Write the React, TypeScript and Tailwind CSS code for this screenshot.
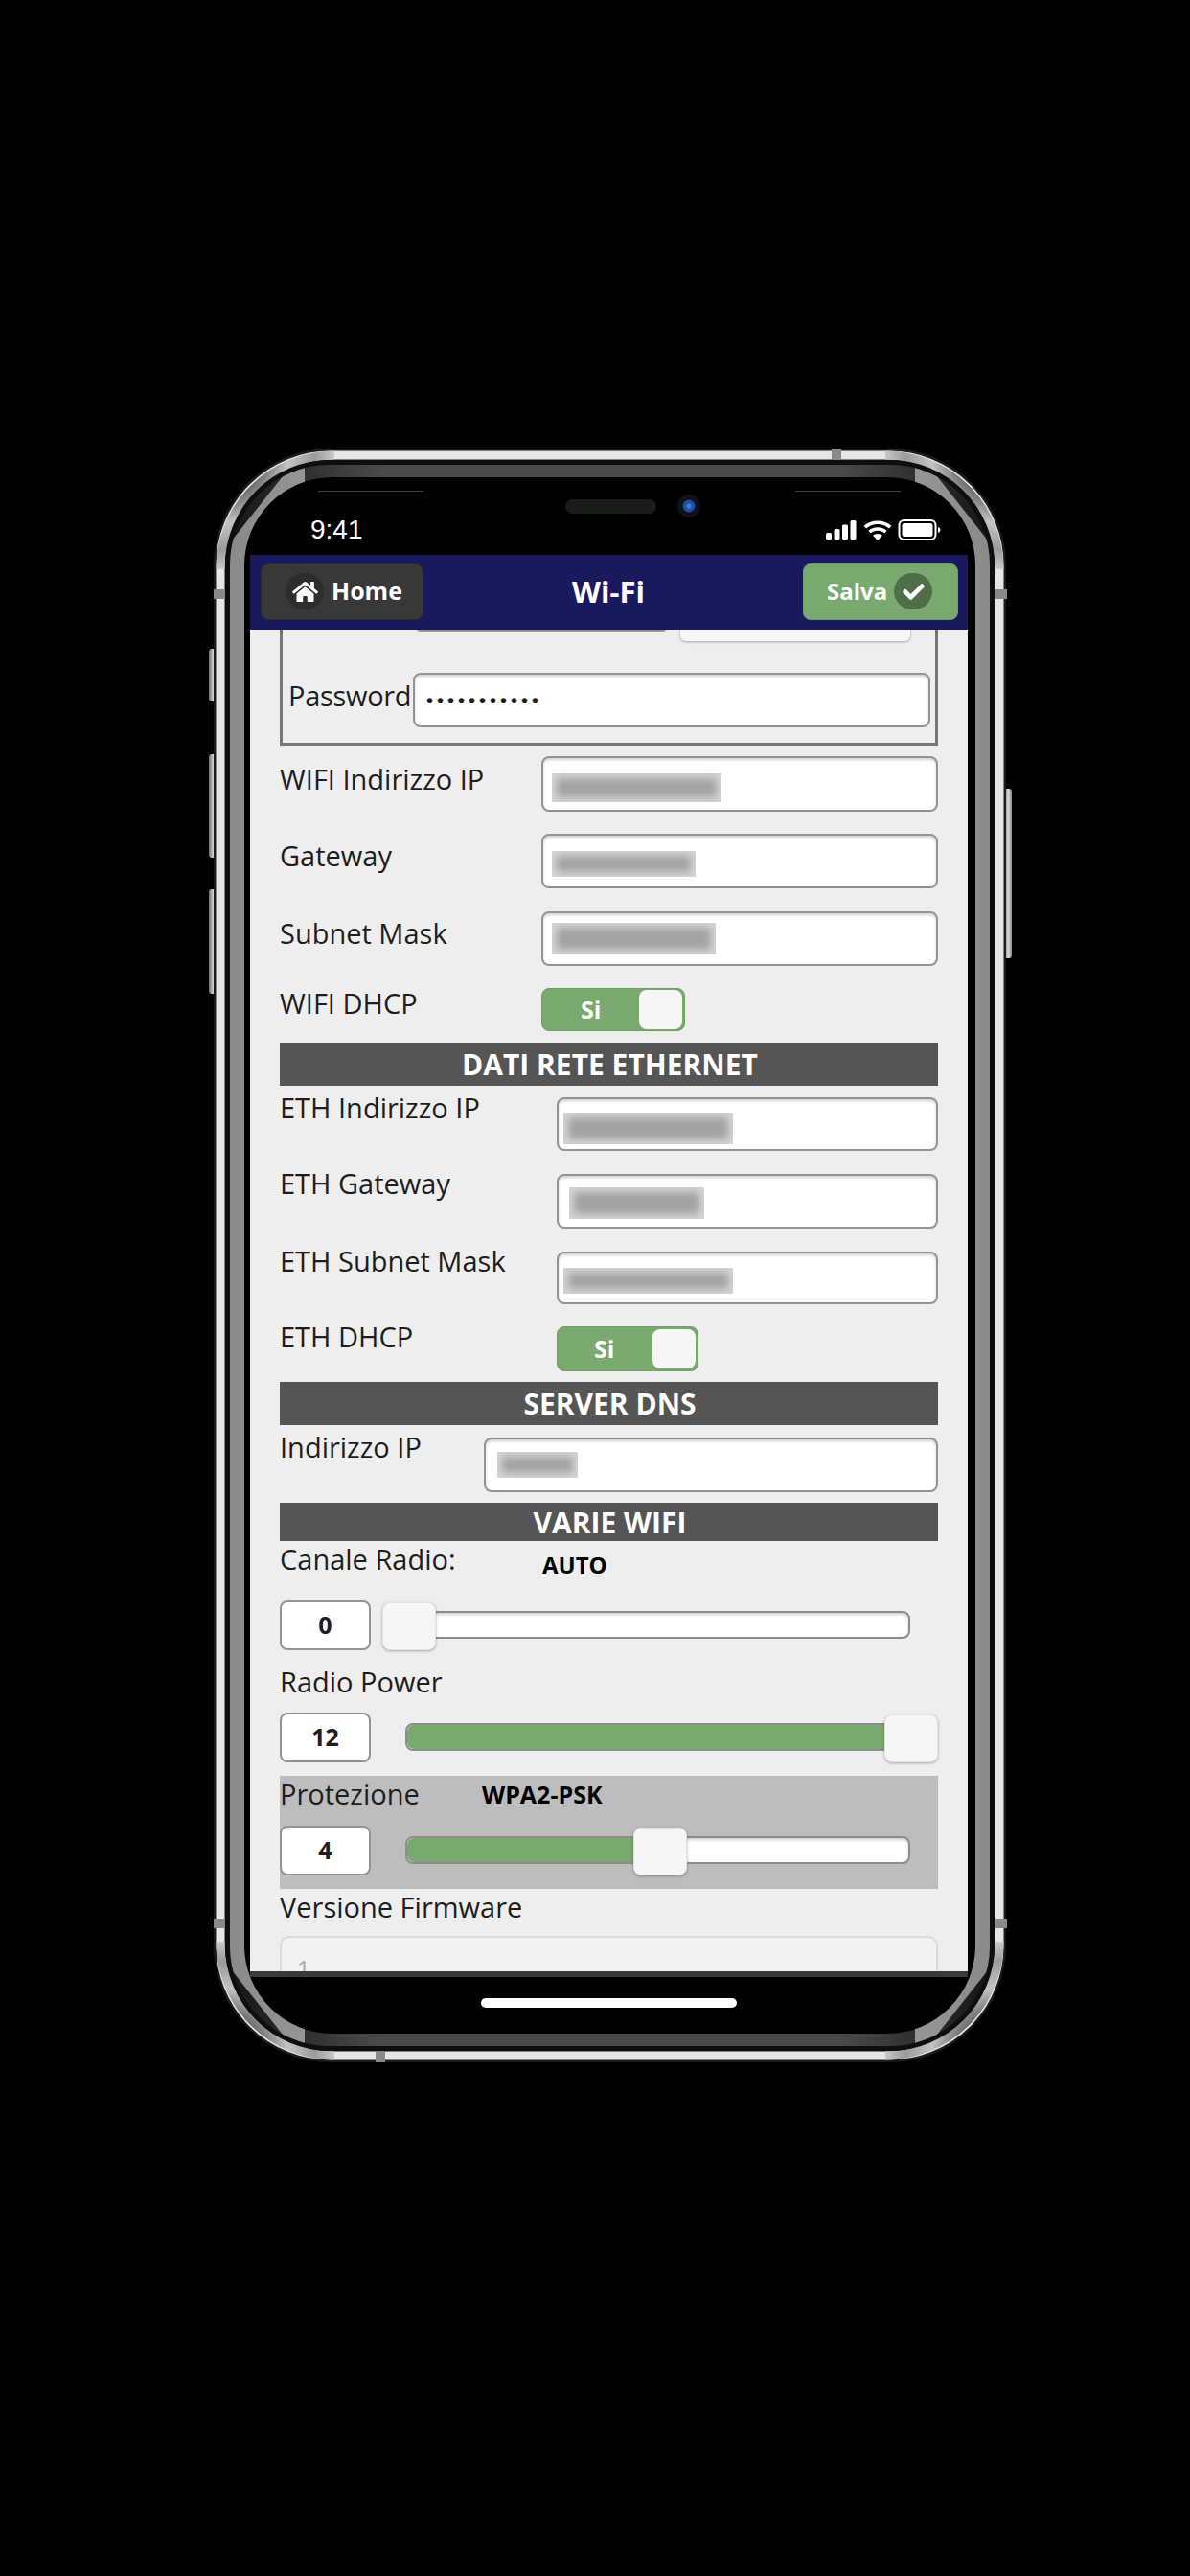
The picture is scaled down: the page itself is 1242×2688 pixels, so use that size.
import type { ReactNode } from "react"
import { FaCheck, FaHome } from "react-icons/fa"

const font = "font-['Open_Sans',sans-serif]"

function Blurred({ className }: { className: string }) {
  return (
    <div className={`overflow-hidden bg-[#d6d6d6] p-[5px] ${className}`}>
      <div className="h-full w-full bg-[#a2a2a2] blur-[4px]" />
    </div>
  )
}

function TextBox({ className, children }: { className: string; children?: ReactNode }) {
  return (
    <div className={`rounded-[8px] border-2 border-[#939393] bg-white shadow-[inset_0_2px_3px_rgba(0,0,0,0.18)] ${className}`}>
      {children}
    </div>
  )
}

function Row({ label, labelClass, className, children }: { label: string; labelClass: string; className: string; children: ReactNode }) {
  return (
    <div className={`flex ${className}`}>
      <div className={`shrink-0 text-[29px] leading-[20px] whitespace-nowrap text-[#1d1d1d] ${labelClass}`}>{label}</div>
      {children}
    </div>
  )
}

function Toggle({ className }: { className: string }) {
  return (
    <div className={`flex items-center justify-between rounded-[8px] border border-[#6f9e66] bg-[#79a96f] pr-[2px] ${className}`}>
      <span className="text-[25px] font-bold text-white">Si</span>
      <div className="h-[41px] w-[45px] rounded-[8px] bg-[#f6f6f6]" />
    </div>
  )
}

function SectionBar({ title, className }: { title: string; className: string }) {
  return (
    <div className={`flex items-center justify-center bg-[#555555] pl-[2px] text-[30px] font-bold text-white ${className}`}>{title}</div>
  )
}

function Slider({ value, max, className }: { value: number; max: number; className?: string }) {
  const left = (value / max) * 524 - 26
  return (
    <div className={`flex items-start ${className ?? ""}`}>
      <div className="flex h-[52px] w-[95px] items-center justify-center rounded-[8px] border-2 border-[#939393] bg-white text-[25px] font-bold text-[#1d1d1d]">
        {value}
      </div>
      <div className="relative ml-[36px] mt-[11px] h-[29px] w-[527px] rounded-[8px] border-2 border-[#8c8c8c] bg-white shadow-[inset_0_2px_3px_rgba(0,0,0,0.18)]">
        {value > 0 && <div className="h-full rounded-l-[7px] bg-[#79a96f]" style={{ width: left + 10 }} />}
        <div
          className="absolute top-[-11px] h-[50px] w-[56px] rounded-[8px] border border-[#e2e2e2] bg-[#f6f6f6] shadow-[0_1px_3px_rgba(0,0,0,0.3)]"
          style={{ left }}
        />
      </div>
    </div>
  )
}

function PhoneFrame() {
  const cornerArc = "M3 122 A119 119 0 0 1 122 3"
  return (
    <svg className="absolute inset-0 overflow-visible" width="827" height="1684" viewBox="0 0 827 1684" fill="none">
      <defs>
        <radialGradient id="corner" gradientUnits="userSpaceOnUse" cx="0" cy="0" r="135">
          <stop offset="0.36" stopColor="#6a6a6a" />
          <stop offset="0.55" stopColor="#c4c4c4" />
          <stop offset="0.75" stopColor="#9a9a9a" />
          <stop offset="1" stopColor="#e8e8e8" />
        </radialGradient>
        <linearGradient id="sideL" x1="0" x2="1" y1="0" y2="0">
          <stop offset="0" stopColor="#8a8a8a" />
          <stop offset="0.35" stopColor="#b4b4b4" />
          <stop offset="1" stopColor="#555555" />
        </linearGradient>
        <linearGradient id="sideR" x1="1" x2="0" y1="0" y2="0">
          <stop offset="0" stopColor="#8a8a8a" />
          <stop offset="0.35" stopColor="#b4b4b4" />
          <stop offset="1" stopColor="#555555" />
        </linearGradient>
        <linearGradient id="topBand" x1="0" x2="1" y1="0" y2="0">
          <stop offset="0" stopColor="#161616" />
          <stop offset="0.2" stopColor="#4a4a4a" />
          <stop offset="0.8" stopColor="#4a4a4a" />
          <stop offset="1" stopColor="#161616" />
        </linearGradient>
        <linearGradient id="button" x1="0" x2="1" y1="0" y2="0">
          <stop offset="0" stopColor="#6e6e6e" />
          <stop offset="0.6" stopColor="#d8d8d8" />
          <stop offset="1" stopColor="#8a8a8a" />
        </linearGradient>
        <clipPath id="leftPiece">
          <polygon points="95,0 0,120 0,1564 95,1684" />
        </clipPath>
        <clipPath id="rightPiece">
          <polygon points="732,0 827,120 827,1564 732,1684" />
        </clipPath>
      </defs>
      {/* side buttons */}
      <rect x="-5" y="209" width="8" height="55" rx="3" fill="url(#button)" />
      <rect x="-5" y="319" width="8" height="108" rx="3" fill="url(#button)" />
      <rect x="-5" y="460" width="8" height="109" rx="3" fill="url(#button)" />
      <rect x="824" y="355" width="9" height="177" rx="3" fill="url(#button)" />
      {/* body */}
      <rect x="0" y="0" width="827" height="1684" rx="122" fill="#1b1b1b" />
      <rect x="7" y="7" width="813" height="1670" rx="115" stroke="#e6e6e6" strokeWidth="9" />
      <g stroke="url(#corner)" strokeWidth="9" transform="translate(4 4)">
        <path d={cornerArc} />
      </g>
      <g stroke="url(#corner)" strokeWidth="9" transform="translate(823 4) scale(-1 1)">
        <path d={cornerArc} />
      </g>
      <g stroke="url(#corner)" strokeWidth="9" transform="translate(4 1680) scale(1 -1)">
        <path d={cornerArc} />
      </g>
      <g stroke="url(#corner)" strokeWidth="9" transform="translate(823 1680) scale(-1 -1)">
        <path d={cornerArc} />
      </g>
      <rect x="12" y="12" width="803" height="1660" rx="110" fill="#0e0e0e" />
      <rect x="17" y="17" width="793" height="1650" rx="104" fill="url(#topBand)" />
      <rect x="17" y="17" width="793" height="1650" rx="104" fill="url(#sideL)" clipPath="url(#leftPiece)" />
      <rect x="17" y="17" width="793" height="1650" rx="104" fill="url(#sideR)" clipPath="url(#rightPiece)" />
      <rect x="32" y="30" width="763" height="1624" rx="92" fill="#000000" />
      {/* antenna bands */}
      <rect x="0" y="147" width="12" height="10" fill="#8a8a8a" />
      <rect x="816" y="147" width="12" height="10" fill="#8a8a8a" />
      <rect x="0" y="1534" width="12" height="10" fill="#8a8a8a" />
      <rect x="816" y="1534" width="12" height="10" fill="#8a8a8a" />
      <rect x="645" y="0" width="10" height="12" fill="#8a8a8a" />
      <rect x="169" y="1673" width="10" height="11" fill="#8a8a8a" />
      {/* earpiece, camera and hairlines */}
      <rect x="367" y="53" width="95" height="15" rx="7.5" fill="#1a1c1a" />
      <circle cx="496" cy="60" r="12" fill="#0f121a" />
      <circle cx="496" cy="60" r="6.500" fill="#1f4f9f" />
      <circle cx="496" cy="60" r="2.500" fill="#3f7fdc" />
      <rect x="109" y="44" width="110" height="1" fill="#3d3d3d" />
      <rect x="607" y="44" width="110" height="1" fill="#3d3d3d" />
    </svg>
  )
}

function StatusIcons() {
  return (
    <svg width="122" height="22" viewBox="0 0 122 22" fill="white">
      <rect x="0" y="14" width="6" height="7" rx="1.5" />
      <rect x="8.5" y="10" width="6" height="11" rx="1.5" />
      <rect x="17" y="5.5" width="6" height="15.5" rx="1.5" />
      <rect x="25.5" y="1" width="6" height="20" rx="1.5" />
      <path d="M54 1.500c-5.900 0-10.800 2-14.400 5.300l2.400 2.700C45 6.800 49.100 5 54 5s9 1.800 12 4.500l2.400-2.700C64.800 3.500 59.900 1.500 54 1.500z" />
      <path d="M54 8.300c-3.900 0-7.200 1.400-9.600 3.500l2.500 2.700c1.800-1.600 4.200-2.700 7.100-2.700s5.300 1.100 7.100 2.700l2.500-2.700C61.200 9.700 57.900 8.300 54 8.300z" />
      <path d="M54 15c-2 0-3.700.7-4.900 1.800l4.900 5.200 4.900-5.200C57.700 15.700 56 15 54 15z" />
      <rect x="76.500" y="1" width="38" height="20" rx="5" fill="none" stroke="white" strokeWidth="2" />
      <rect x="79.500" y="4" width="32" height="14" rx="2.500" />
      <path d="M117 8v6c1.500-.4 2.500-1.600 2.500-3s-1-2.600-2.500-3z" />
    </svg>
  )
}

export default function App() {
  return (
    <div className={`min-h-[2688px] bg-black pl-[223px] pt-[468px] ${font}`}>
      <div className="relative h-[1684px] w-[827px]">
        <PhoneFrame />
        <div className="absolute left-[38px] top-[111px] flex h-[1589px] w-[749px] flex-col">
          <div className="absolute left-[63px] top-[-40px] text-[28px] leading-[28px] text-white font-['Liberation_Sans',sans-serif]">9:41</div>
          <div className="absolute left-[601px] top-[-37px]">
            <StatusIcons />
          </div>
          {/* header */}
          <header className="flex h-[78px] shrink-0 items-center justify-between bg-[#191a5e] pb-[2px] pl-[11px] pr-[10px]">
            <div className="flex h-[59px] w-[170px] items-center rounded-[8px] border border-[#2c2c2c] bg-[#383838] pl-[25px]">
              <div className="flex h-[38px] w-[40px] items-center justify-center rounded-full bg-[#2d2d2d]">
                <FaHome className="h-[27px] w-[27px] text-white" />
              </div>
              <span className="ml-[8px] text-[25px] font-bold text-white">Home</span>
            </div>
            <h1 className="ml-[-10px] text-[31px] font-bold text-white">Wi-Fi</h1>
            <div className="flex h-[59px] w-[162px] items-center rounded-[8px] border border-[#6f9e66] bg-[#79a96f] pl-[24px]">
              <span className="text-[24px] font-bold text-white">Salva</span>
              <div className="ml-[7px] flex h-[38px] w-[40px] items-center justify-center rounded-full bg-[#4e7049]">
                <FaCheck className="h-[23px] w-[23px] text-white" />
              </div>
            </div>
          </header>

          {/* form */}
          <main className="h-[1400px] shrink-0 overflow-hidden bg-[#eeeeee] px-[31px]">
            <section className="h-[121px] border-x-[3px] border-b-[3px] border-[#777777]">
              <div className="flex items-start">
                <div className="ml-[138px] mt-[-30px] h-[32px] w-[264px] rounded-[6px] border-2 border-[#939393] bg-white" />
                <div className="ml-[13px] mt-[-30px] h-[42px] w-[240px] rounded-[6px] bg-[#f6f6f6] shadow-[0_1px_3px_rgba(0,0,0,0.3)]" />
              </div>
              <Row label="Password" labelClass="w-[136px] pl-[6px] pt-[14px] tracking-[-0.3px]" className="mt-[33px]">
                <TextBox className="flex h-[57px] w-[540px] items-center pl-[12px]">
                  <span className="text-[20px] font-bold leading-none tracking-[4px] text-[#1d1d1d] font-['Liberation_Sans',sans-serif]">•••••••••••</span>
                </TextBox>
              </Row>
            </section>

            <Row label="WIFI Indirizzo IP" labelClass="w-[273px] pt-[14px]" className="mt-[11px]">
              <TextBox className="h-[58px] w-[414px] pl-[9px] pt-[16px]"><Blurred className="h-[30px] w-[177px]" /></TextBox>
            </Row>
            <Row label="Gateway" labelClass="w-[273px] pt-[13px]" className="mt-[23px]">
              <TextBox className="h-[57px] w-[414px] pl-[9px] pt-[16px]"><Blurred className="h-[27px] w-[150px]" /></TextBox>
            </Row>
            <Row label="Subnet Mask" labelClass="w-[273px] pt-[13px]" className="mt-[24px]">
              <TextBox className="h-[57px] w-[414px] pl-[9px] pt-[10px]"><Blurred className="h-[33px] w-[171px]" /></TextBox>
            </Row>
            <Row label="WIFI DHCP" labelClass="w-[273px] pt-[6px]" className="mt-[23px]">
              <Toggle className="h-[45px] w-[150px] pl-[40px]" />
            </Row>
            <SectionBar title="DATI RETE ETHERNET" className="mt-[12px] h-[45px]" />

            <Row label="ETH Indirizzo IP" labelClass="w-[289px] pt-px" className="mt-[12px]">
              <TextBox className="h-[56px] w-[398px] pl-[5px] pt-[14px]"><Blurred className="h-[33px] w-[177px]" /></TextBox>
            </Row>
            <Row label="ETH Gateway" labelClass="w-[289px]" className="mt-[24px]">
              <TextBox className="h-[57px] w-[398px] pl-[11px] pt-[12px]"><Blurred className="h-[33px] w-[141px]" /></TextBox>
            </Row>
            <Row label="ETH Subnet Mask" labelClass="w-[289px]" className="mt-[24px]">
              <TextBox className="h-[55px] w-[398px] pl-[5px] pt-[15px]"><Blurred className="h-[27px] w-[177px]" /></TextBox>
            </Row>
            <Row label="ETH DHCP" labelClass="w-[289px] pt-px" className="mt-[23px]">
              <Toggle className="h-[47px] w-[148px] pl-[38px]" />
            </Row>
            <SectionBar title="SERVER DNS" className="mt-[11px] h-[45px]" />

            <Row label="Indirizzo IP" labelClass="w-[213px]" className="mt-[13px]">
              <TextBox className="h-[57px] w-[474px] pl-[12px] pt-[13px]"><Blurred className="h-[27px] w-[84px]" /></TextBox>
            </Row>
            <SectionBar title="VARIE WIFI" className="mt-[11px] h-[40px]" />

            <div className="mt-[9px] flex h-[20px] items-start">
              <div className="w-[274px] text-[29px] leading-[20px] text-[#1d1d1d]">Canale Radio:</div>
              <div className="mt-[6px] text-[24px] font-bold leading-[20px] text-black">AUTO</div>
            </div>
            <Slider value={0} max={12} className="mt-[33px]" />

            <div className="mt-[23px] h-[20px] text-[29px] leading-[20px] text-[#1d1d1d]">Radio Power</div>
            <Slider value={12} max={12} className="mt-[22px]" />

            <div className="mt-[14px] h-[118px] bg-[#bdbdbd] pt-[9px]">
              <div className="flex h-[20px] items-start">
                <div className="w-[211px] text-[29px] leading-[20px] text-[#1d1d1d]">Protezione</div>
                <div className="text-[25px] font-bold leading-[20px] text-black">WPA2-PSK</div>
              </div>
              <Slider value={4} max={8} className="mt-[23px]" />
            </div>

            <div className="mt-[9px] h-[20px] text-[29px] leading-[20px] text-[#1d1d1d]">Versione Firmware</div>
            <div className="mt-[20px] h-[60px] rounded-[10px] border-2 border-[#dadada] bg-[#f2f2f2] pl-[16px] pt-[14px] text-[24px] text-[#a8a8a8]">
              1
            </div>
          </main>

          <div className="h-[6px] shrink-0 bg-[#3a3a3a]" />
          <div className="mx-auto mt-[22px] h-[10px] w-[267px] rounded-full bg-white" />
        </div>
      </div>
    </div>
  )
}
